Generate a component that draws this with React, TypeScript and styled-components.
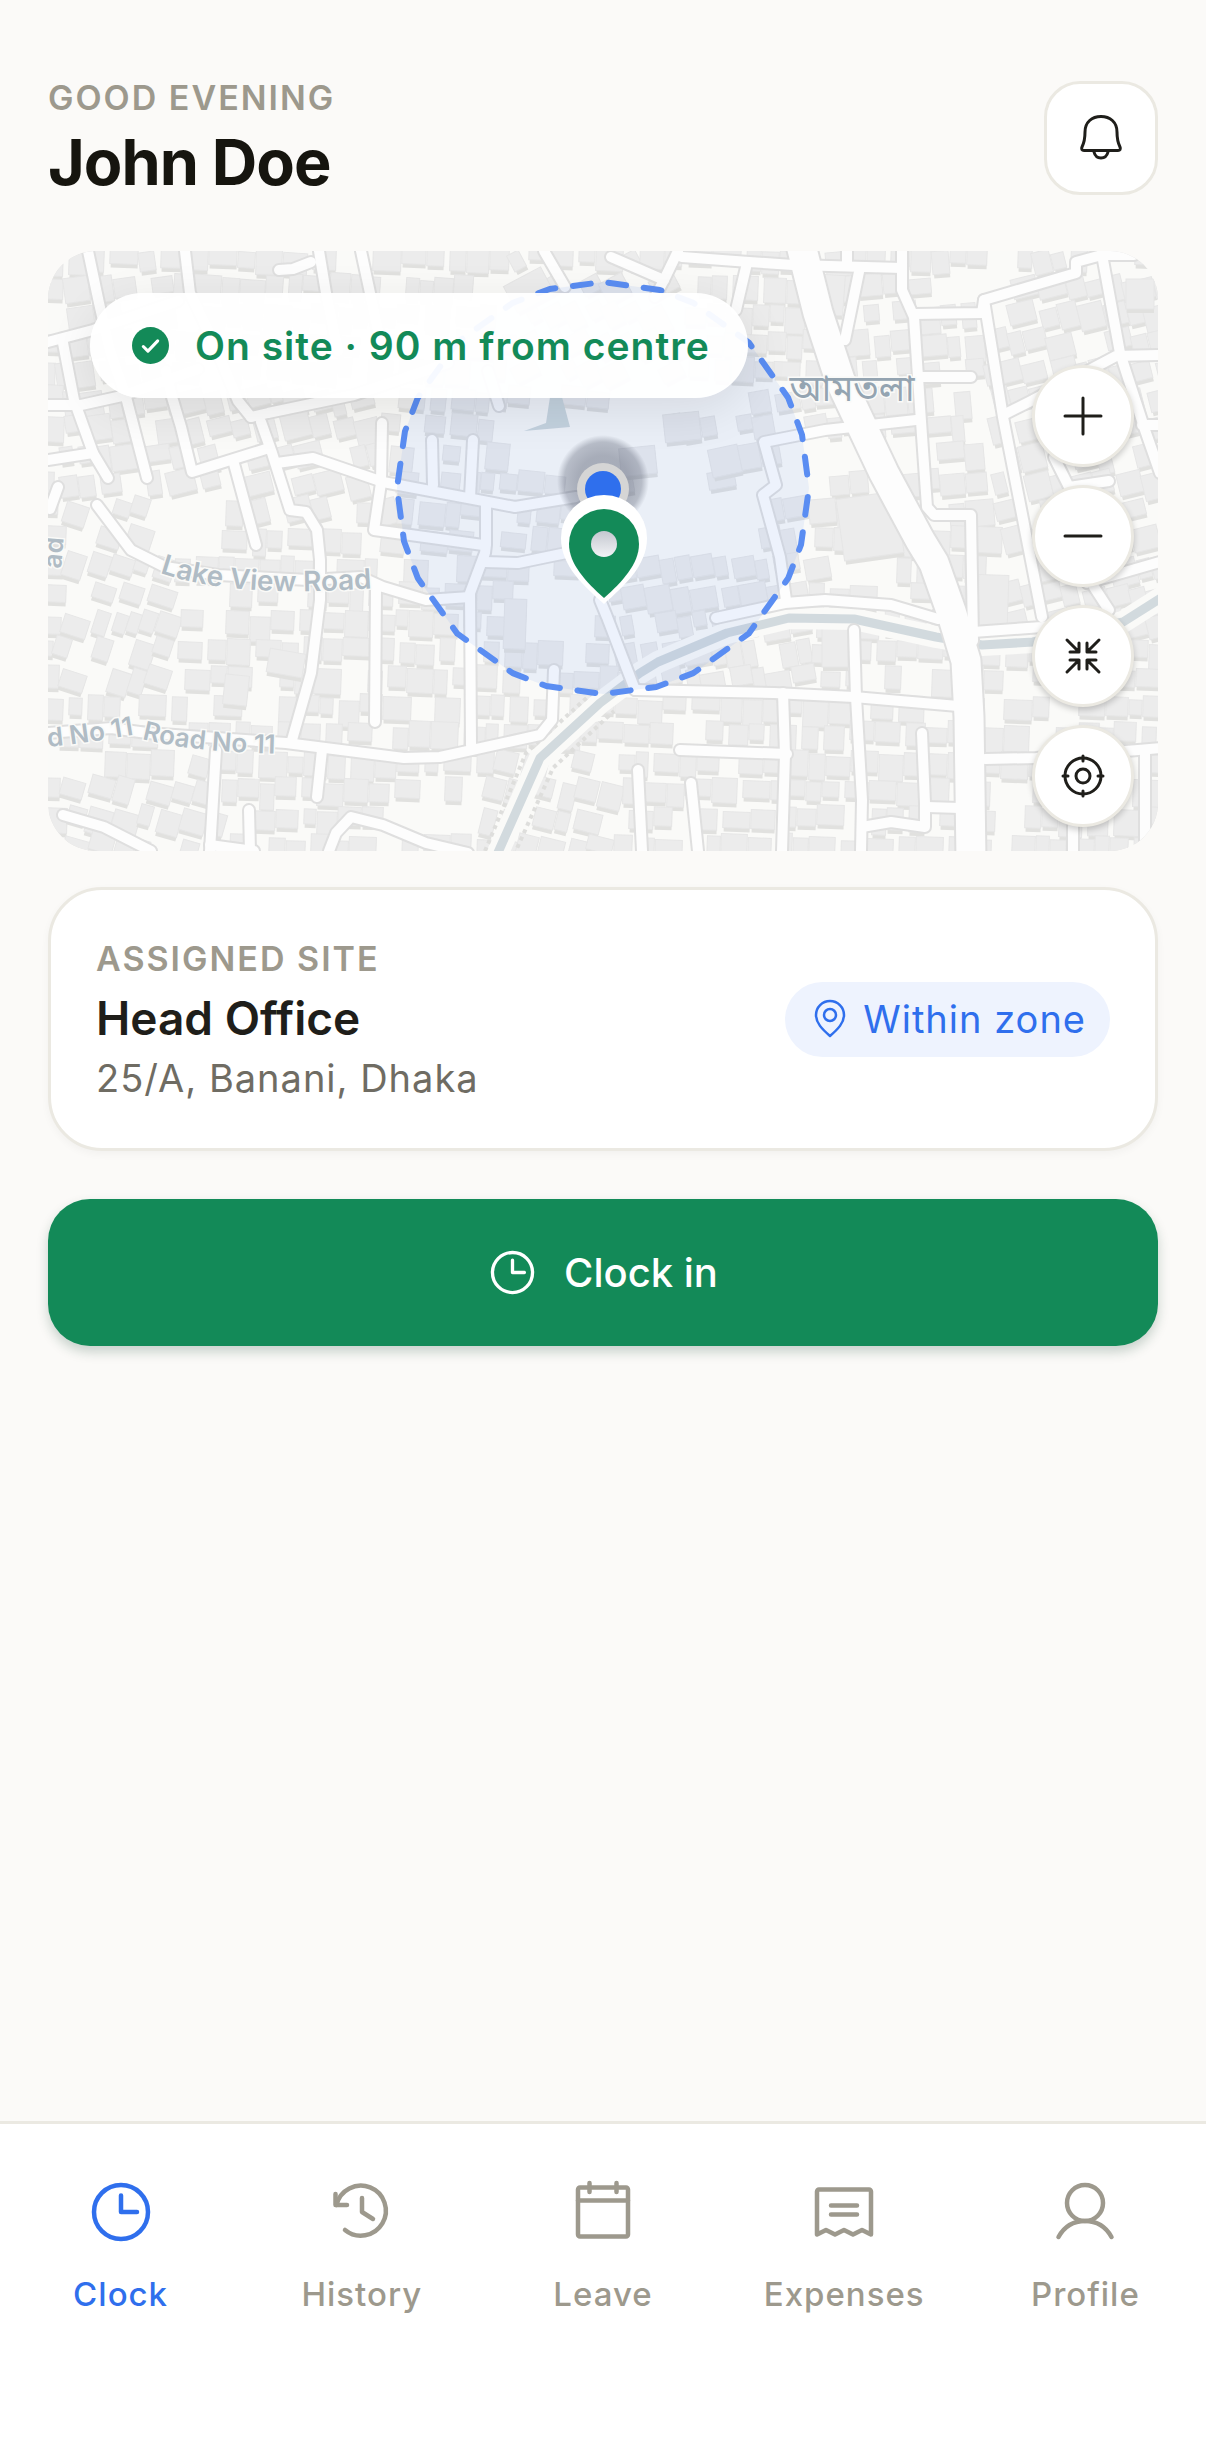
import React from "react"
import styled, { createGlobalStyle } from "styled-components"

const colors = {
    page: "#fbfaf8",
    card: "#ffffff",
    line: "#ebe9e2",
    ink: "#1f1e1a",
    heading: "#16150f",
    muted: "#9d998d",
    body: "#6f6c63",
    green: "#138a58",
    blue: "#2f6fed",
    blueSoft: "#eef3fe",
}

const GlobalStyle = createGlobalStyle`
  * {
    box-sizing: border-box;
  }

  body {
    margin: 0;
    background: ${colors.page};
    color: ${colors.ink};
    font-family: Inter, "Liberation Sans", sans-serif;
  }

  button {
    font-family: inherit;
    cursor: pointer;
  }

  h1, h2, p {
    margin: 0;
  }

  svg {
    display: block;
  }
`

/* ---------- map data ---------- */

type Point = [number, number]

const MAP_W = 1110
const MAP_H = 600
const ZONE: Point = [555, 237]
const ZONE_R = 206

const minorRoads = [
    "40,0 51,52 62,100 78,146 99,227",
    "137,0 142,42 165,90 190,150 203,166",
    "118,120 124,146 133,176 144,221 221,197",
    "271,0 278,42 290,100",
    "231,19 245,18 263,11",
    "313,0 322,42 330,80",
    "0,91 45,79 130,50",
    "0,154 33,154 74,145 150,118",
    "15,92 26,149 45,202 60,227",
    "0,209 45,202",
    "203,166 220,162 306,144 400,112",
    "213,171 224,202 242,259 258,261 269,279 272,309 272,349 263,422 244,489",
    "229,212 265,207 335,231 467,256 528,246",
    "185,209 208,294",
    "334,172 333,232 326,279 435,294",
    "384,189 385,234",
    "425,189 422,246",
    "438,252 438,294 437,302 422,342 423,494",
    "437,311 470,312 528,300",
    "49,254 83,299 117,316 170,324 260,329 313,326 335,336 378,349 422,346",
    "328,336 327,471",
    "10,236 2,258",
    "0,482 63,477 99,482 238,492 356,507 392,506 492,484 504,469 506,419",
    "168,499 162,600",
    "162,594 206,600",
    "274,499 269,546",
    "201,559 202,600",
    "15,564 56,576 103,600",
    "281,600 288,582 303,566 335,574 378,592 420,602",
    "451,155 440,120",
    "552,349 559,366 587,439",
    "587,439 726,442 806,446 910,455",
    "668,367 737,352 777,349 843,354 890,368",
    "868,169 777,179 716,191 728,234 715,244 732,306 738,349",
    "854,0 854,39 866,66 872,156 879,256 886,264 923,264 925,390",
    "866,63 934,62 936,49 1028,22 1028,11 1054,4 1086,4",
    "936,49 955,166 981,299 994,366",
    "955,164 985,149 1068,105 1110,104",
    "1055,9 1072,102 1097,179 1112,222",
    "1094,174 1112,174",
    "872,126 923,126",
    "634,6 701,11 745,14 854,17",
    "563,6 616,29 630,0",
    "616,29 607,46",
    "699,12 688,59",
    "812,16 797,89",
    "799,0 799,14",
    "496,0 517,36",
    "1006,206 1021,236 1061,230",
    "1039,332 1112,311",
    "1046,336 1061,359",
    "925,381 994,376 1040,370",
    "937,508 988,507 1090,499 1112,497",
    "1097,499 1097,600",
    "1025,575 1025,600",
    "806,379 808,446 814,549 813,600",
    "735,442 737,503 734,600",
    "632,499 739,503",
    "590,519 594,600",
    "643,532 650,600",
    "874,482 877,552 877,576 843,571 814,576",
    "879,556 912,557",
]

const avenue = "752,-10 770,62 792,129 836,222 872,289 886,312 903,360 918,410 921,466 923,610"
const canal = "448,606 492,507 552,452 592,422 610,411 679,382 741,367 806,368 888,386 934,394 985,391 1075,371 1116,345"
const canalPaths = ["437,600 478,502 545,441", "466,604 505,517 566,460"]

/* direction that the houses face, by district */
const districts: { box: [number, number, number, number]; angle: number }[] = [
    { box: [0, 0, 110, 230], angle: -8 },
    { box: [110, 0, 460, 120], angle: 4 },
    { box: [110, 120, 330, 250], angle: -14 },
    { box: [0, 230, 120, 440], angle: 18 },
    { box: [440, 0, 620, 120], angle: -28 },
    { box: [330, 120, 560, 290], angle: 6 },
    { box: [560, 120, 760, 440], angle: -10 },
    { box: [760, 0, 930, 260], angle: -5 },
    { box: [930, 0, 1110, 370], angle: -14 },
    { box: [0, 505, 160, 600], angle: 16 },
    { box: [430, 500, 560, 600], angle: 14 },
]

/* blocks left without houses */
const openGround: [number, number, number, number][] = [
    [104, 236, 176, 300],
    [30, 240, 52, 300],
    [390, 300, 420, 340],
    [340, 540, 430, 590],
    [330, 460, 352, 490],
    [450, 150, 610, 230],
    [610, 130, 712, 160],
    [612, 190, 660, 310],
    [470, 320, 550, 400],
    [570, 260, 640, 310],
    [640, 240, 712, 300],
    [205, 420, 236, 470],
    [760, 180, 790, 220],
    [745, 190, 780, 240],
    [785, 300, 850, 345],
    [950, 530, 975, 600],
    [50, 400, 80, 425],
    [900, 20, 930, 60],
]

const seeded = (n: number) => {
    const v = Math.sin(n * 127.1 + 11.7) * 43758.5453
    return v - Math.floor(v)
}

const inside = ([x0, y0, x1, y1]: [number, number, number, number], x: number, y: number) =>
    x >= x0 && x < x1 && y >= y0 && y < y1

interface House {
    x: number
    y: number
    w: number
    h: number
    angle: number
}

const buildHouses = () => {
    const houses: House[] = []
    let n = 1
    for (let row = -6; row < MAP_H; row += 28) {
        let x = -8
        while (x < MAP_W) {
            const w = 12 + Math.round(seeded(n) * 16)
            const h = 15 + Math.round(seeded(n + 0.3) * 12)
            const y = row + Math.round(seeded(n + 0.6) * 8)
            const keep = seeded(n + 0.8) > 0.12
            if (keep && !openGround.some(g => inside(g, x + w / 2, y + h / 2))) {
                const district = districts.find(d => inside(d.box, x, y))
                houses.push({ x, y, w, h, angle: district ? district.angle : 2 })
            }
            x += w + (seeded(n + 0.9) > 0.7 ? 6 : 1)
            n += 1
        }
    }
    return houses
}

const bigHouses: House[] = [
    { x: 792, y: 244, w: 60, h: 62, angle: -8 },
    { x: 930, y: 324, w: 30, h: 52, angle: 2 },
    { x: 616, y: 162, w: 36, h: 28, angle: -6 },
    { x: 662, y: 196, w: 30, h: 28, angle: -12 },
    { x: 572, y: 196, w: 36, h: 28, angle: -6 },
    { x: 456, y: 348, w: 22, h: 50, angle: 2 },
    { x: 774, y: 376, w: 26, h: 40, angle: 0 },
    { x: 460, y: 24, w: 42, h: 30, angle: -28 },
    { x: 1078, y: 28, w: 28, h: 30, angle: 0 },
    { x: 220, y: 400, w: 36, h: 24, angle: 10 },
    { x: 176, y: 424, w: 24, h: 30, angle: 6 },
    { x: 772, y: 24, w: 24, h: 40, angle: 4 },
]

const houses = [...buildHouses(), ...bigHouses]

const quarterTurn = [0, 16, 26, 45, 64, 75]

const zoneOutline = [0, 90, 180, 270]
    .flatMap(start => quarterTurn.map(step => start + step))
    .map(deg => {
        const rad = (deg * Math.PI) / 180
        return `${ZONE[0] + ZONE_R * Math.cos(rad)},${ZONE[1] + ZONE_R * Math.sin(rad)}`
    })
    .join(" ")

const SiteMap = () => (
    <MapDrawing
        viewBox={`0 0 ${MAP_W} ${MAP_H}`}
        preserveAspectRatio="xMidYMid slice"
        role="img"
        aria-label="Map of the assigned site"
    >
        <defs>
            <path id="lake-view" d="M112 322 Q190 349 340 336" />
            <path id="road-11-a" d="M0 496 Q40 492 120 478" />
            <path id="road-11-b" d="M94 488 Q150 503 260 503" />
            <path id="side-road" d="M13 318 L18 262" />
            <radialGradient id="dot-halo">
                <stop offset="0.55" stopColor="#4b5163" stopOpacity="0.42" />
                <stop offset="0.84" stopColor="#4b5163" stopOpacity="0.32" />
                <stop offset="1" stopColor="#4b5163" stopOpacity="0" />
            </radialGradient>
            <linearGradient id="pin-hole" x1="0" y1="0" x2="0" y2="1">
                <stop offset="0" stopColor="#c4c8d0" />
                <stop offset="1" stopColor="#f2f3f6" />
            </linearGradient>
        </defs>
        <rect width={MAP_W} height={MAP_H} fill="#fafaf8" />
        {houses.map((b, i) => (
            <g key={i} transform={`rotate(${b.angle} ${b.x + b.w / 2} ${b.y + b.h / 2})`}>
                <rect x={b.x + 1} y={b.y + 4} width={b.w - 1} height={b.h} fill="#e1e1df" />
                <rect x={b.x} y={b.y} width={b.w} height={b.h} fill="#ececec" stroke="#e6e6e6" />
            </g>
        ))}
        <g fill="none" strokeLinejoin="round">
            <polyline points={canal} stroke="#fafaf8" strokeWidth="22" />
            <polyline points={canal} stroke="#d2dade" strokeWidth="9" />
            {canalPaths.map(p => (
                <polyline key={p} points={p} stroke="#dededc" strokeWidth="4" strokeDasharray="4 4" />
            ))}
        </g>
        <path d="M476 180 L498 172 L502 146 L514 146 L522 176 Z" fill="#cfd9dd" />
        <g fill="none" strokeLinejoin="round" strokeLinecap="round">
            {minorRoads.map(p => (
                <polyline key={p} points={p} stroke="#dfdfdf" strokeWidth="14" />
            ))}
            <polyline points={avenue} stroke="#dfdfdf" strokeWidth="33" />
            {minorRoads.map(p => (
                <polyline key={p} points={p} stroke="#fdfdfd" strokeWidth="10" />
            ))}
            <polyline points={avenue} stroke="#fdfdfd" strokeWidth="29" />
        </g>
        <polygon
            points={zoneOutline}
            fill={colors.blue}
            fillOpacity="0.08"
            stroke="#5a8df2"
            strokeWidth="6"
            strokeLinecap="round"
            strokeLinejoin="round"
            strokeDasharray="18 17.7"
            strokeDashoffset="-9"
        />
        <MapLabel>
            <textPath href="#lake-view">Lake View Road</textPath>
        </MapLabel>
        <MapLabel $small>
            <textPath href="#road-11-a">d No 11</textPath>
        </MapLabel>
        <MapLabel $small>
            <textPath href="#road-11-b">Road No 11</textPath>
        </MapLabel>
        <MapLabel $small>
            <textPath href="#side-road">ad</textPath>
        </MapLabel>
        <PlaceLabel x="804" y="150">আমতলা</PlaceLabel>
        <circle cx="555" cy="230" r="46" fill="url(#dot-halo)" />
        <circle cx="555" cy="238" r="26" fill="#d5d5d5" />
        <circle cx="555" cy="238" r="18" fill={colors.blue} />
        <path
            d="M556 353 C536 335 513 315 513 287 A43 43 0 0 1 599 287 C599 315 576 335 556 353 Z"
            fill="#ffffff"
        />
        <path
            d="M556 347 C538 331 521 313 521 293 A35 35 0 0 1 591 293 C591 313 574 331 556 347 Z"
            fill={colors.green}
        />
        <circle cx="556" cy="293" r="13" fill="url(#pin-hole)" />
    </MapDrawing>
)

/* ---------- icons ---------- */

interface IconProps {
    size: number
    weight?: number
    box?: number
    children: React.ReactNode
}

const Icon = ({ size, weight = 4.5, box = 66, children }: IconProps) => (
    <svg
        width={size}
        height={size}
        viewBox={`0 0 ${box} ${box}`}
        fill="none"
        stroke="currentColor"
        strokeWidth={weight}
        strokeLinecap="round"
        strokeLinejoin="round"
        aria-hidden="true"
    >
        {children}
    </svg>
)

const clockShape = (
    <>
        <circle cx="33" cy="33" r="27" />
        <path d="M33 16.500V33H49" />
    </>
)

const tabs = [
    { name: "Clock", icon: clockShape },
    {
        name: "History",
        icon: (
            <>
                <path d="M6.500 15V26H18" />
                <path d="M7.500 26A25 25 0 1 1 16 51" />
                <path d="M33 19V33L44 40" />
            </>
        ),
    },
    {
        name: "Leave",
        icon: (
            <>
                <rect x="8" y="8.500" width="50" height="49" rx="2" />
                <path d="M8 21.500H58M19.500 4V13M46.500 4V13" />
            </>
        ),
    },
    {
        name: "Expenses",
        icon: (
            <>
                <path d="M6 55.500V12.500A2 2 0 0 1 8 10.500H58A2 2 0 0 1 60 12.500V55.500L51 51L42 55.500L33 51L24 55.500L15 51Z" />
                <path d="M20 26.500H46M20 35.500H46" />
            </>
        ),
    },
    {
        name: "Profile",
        icon: (
            <>
                <circle cx="33" cy="24" r="18" />
                <path d="M6.500 58C12 48 21 42 33 42C45 42 54 48 59.500 58" />
            </>
        ),
    },
]

const mapControls = [
    { label: "Zoom in", icon: <path d="M24 6V42M6 24H42" /> },
    { label: "Zoom out", icon: <path d="M6 24H42" /> },
    {
        label: "Fit to zone",
        icon: (
            <path d="M8 8L20 20M20 11V20H11M40 8L28 20M28 11V20H37M8 40L20 28M20 37V28H11M40 40L28 28M28 37V28H37" />
        ),
    },
    {
        label: "My location",
        icon: (
            <>
                <circle cx="24" cy="24" r="18" />
                <circle cx="24" cy="24" r="7" />
                <path d="M24 4V9M24 39V44M4 24H9M39 24H44" />
            </>
        ),
    },
]

const App = () => {
    return (
        <Page>
            <GlobalStyle />
            <Content>
                <Header>
                    <Greeting>
                        <Eyebrow>GOOD EVENING</Eyebrow>
                        <UserName>John Doe</UserName>
                    </Greeting>
                    <BellButton type="button" aria-label="Notifications">
                        <Icon size={60} box={60} weight={3}>
                            <path d="M13 42.500H47C49 42.500 50 41 49 39C47 35 46 31 46 24C46 14 39 8.500 30 8.500C21 8.500 14 14 14 24C14 31 13 35 11 39C10 41 11 42.500 13 42.500Z" />
                            <path d="M23 44C24 48 27 50 30 50C33 50 36 48 37 44" />
                        </Icon>
                    </BellButton>
                </Header>

                <MapCard>
                    <SiteMap />
                    <StatusChip>
                        <Icon size={37} box={36} weight={3}>
                            <circle cx="18" cy="18" r="18" fill={colors.green} stroke="none" />
                            <path d="M11 19L15.500 23.500L25 13.500" stroke="#ffffff" />
                        </Icon>
                        On site · 90 m from centre
                    </StatusChip>
                    <MapControls>
                        {mapControls.map(c => (
                            <RoundButton type="button" key={c.label} aria-label={c.label}>
                                <Icon size={48} box={48} weight={3}>{c.icon}</Icon>
                            </RoundButton>
                        ))}
                    </MapControls>
                </MapCard>

                <SiteCard>
                    <SiteInfo>
                        <Eyebrow>ASSIGNED SITE</Eyebrow>
                        <SiteName>Head Office</SiteName>
                        <SiteAddress>25/A, Banani, Dhaka</SiteAddress>
                    </SiteInfo>
                    <ZoneBadge>
                        <Icon size={42} box={42} weight={2.5}>
                            <path d="M21 38C13 31 7 25 7 17A14 14 0 0 1 35 17C35 25 29 31 21 38Z" />
                            <circle cx="21" cy="17" r="6" />
                        </Icon>
                        Within zone
                    </ZoneBadge>
                </SiteCard>

                <ClockInButton type="button">
                    <Icon size={49} weight={4.5}>
                        {clockShape}
                    </Icon>
                    Clock in
                </ClockInButton>
            </Content>

            <TabBar>
                {tabs.map((tab, i) => (
                    <Tab
                        href={`#${tab.name.toLowerCase()}`}
                        key={tab.name}
                        $active={i === 0}
                        aria-current={i === 0 ? "page" : undefined}
                    >
                        <Icon size={66}>{tab.icon}</Icon>
                        {tab.name}
                    </Tab>
                ))}
            </TabBar>
        </Page>
    )
}

const Page = styled.div`
  display: flex;
  flex-direction: column;
  min-height: 100vh;
`

const Content = styled.main`
  flex: 1;
  display: flex;
  flex-direction: column;
  padding: 77px 48px 48px;
`

const Header = styled.header`
  display: flex;
  align-items: center;
  justify-content: space-between;
  margin-bottom: 52px;
`

const Greeting = styled.div`
  display: flex;
  flex-direction: column;
  gap: 6px;
`

const Eyebrow = styled.p`
  font-size: 34px;
  line-height: 42px;
  font-weight: 600;
  letter-spacing: 2px;
  color: ${colors.muted};
`

const UserName = styled.h1`
  font-size: 63px;
  line-height: 74px;
  font-weight: 700;
  letter-spacing: -1px;
  color: ${colors.heading};
`

const BellButton = styled.button`
  display: grid;
  place-items: center;
  width: 114px;
  height: 114px;
  padding: 0;
  border: 3px solid ${colors.line};
  border-radius: 36px;
  background: ${colors.card};
  color: ${colors.ink};
`

const MapCard = styled.section`
  position: relative;
  height: 600px;
  border-radius: 48px;
  overflow: hidden;
`

const MapDrawing = styled.svg`
  width: 100%;
  height: 100%;
`

const MapLabel = styled.text<{ $small?: boolean }>`
  font-family: Inter, sans-serif;
  font-size: ${({ $small }) => ($small ? 26 : 28)}px;
  font-weight: 600;
  fill: #b0bcc5;
  stroke: #fafaf8;
  stroke-width: 3px;
  paint-order: stroke;
`

const PlaceLabel = styled.text`
  font-family: "Noto Sans Bengali", "Noto Sans", sans-serif;
  font-size: 36px;
  text-anchor: middle;
  fill: #94a4b1;
  stroke: #fafaf8;
  stroke-width: 3px;
  paint-order: stroke;
`

const StatusChip = styled.div`
  position: absolute;
  top: 42px;
  left: 42px;
  display: flex;
  align-items: center;
  gap: 26px;
  height: 105px;
  padding: 0 38px 0 42px;
  border-radius: 53px;
  background: rgba(255, 255, 255, 0.95);
  box-shadow: 0 12px 48px rgba(0, 0, 0, 0.09);
  font-size: 39px;
  line-height: 48px;
  font-weight: 600;
  letter-spacing: 1px;
  color: ${colors.green};
`

const MapControls = styled.div`
  position: absolute;
  right: 24px;
  bottom: 24px;
  display: flex;
  flex-direction: column;
  gap: 18px;
`

const RoundButton = styled.button`
  display: grid;
  place-items: center;
  width: 102px;
  height: 102px;
  padding: 0;
  border: 3px solid ${colors.line};
  border-radius: 50%;
  background: ${colors.card};
  box-shadow: 0 3px 6px rgba(0, 0, 0, 0.2);
  color: ${colors.ink};
`

const SiteCard = styled.section`
  display: flex;
  align-items: center;
  justify-content: space-between;
  margin-top: 36px;
  padding: 48px 45px;
  border: 3px solid ${colors.line};
  border-radius: 54px;
  background: ${colors.card};
  box-shadow: 0 3px 9px rgba(0, 0, 0, 0.04);
`

const SiteInfo = styled.div`
  display: flex;
  flex-direction: column;
  gap: 6px;
`

const SiteName = styled.h2`
  font-size: 46px;
  line-height: 64px;
  font-weight: 600;
`

const SiteAddress = styled.p`
  font-size: 38px;
  line-height: 44px;
  letter-spacing: 1px;
  color: ${colors.body};
`

const ZoneBadge = styled.div`
  display: flex;
  align-items: center;
  gap: 12px;
  height: 75px;
  padding: 0 24px;
  border-radius: 38px;
  background: ${colors.blueSoft};
  font-size: 38px;
  line-height: 48px;
  letter-spacing: 1px;
  color: ${colors.blue};
`

const ClockInButton = styled.button`
  display: flex;
  align-items: center;
  justify-content: center;
  gap: 27px;
  height: 147px;
  margin-top: 48px;
  border: 0;
  border-radius: 42px;
  background: ${colors.green};
  box-shadow: 0 6px 12px rgba(20, 70, 45, 0.22);
  font-size: 40px;
  line-height: 48px;
  font-weight: 500;
  color: #ffffff;
`

const TabBar = styled.nav`
  display: grid;
  grid-template-columns: repeat(5, 1fr);
  padding: 55px 0 147px;
  border-top: 3px solid ${colors.line};
  background: ${colors.card};
`

const Tab = styled.a<{ $active: boolean }>`
  display: flex;
  flex-direction: column;
  align-items: center;
  gap: 28px;
  font-size: 33px;
  line-height: 42px;
  font-weight: 500;
  letter-spacing: 1px;
  text-decoration: none;
  color: ${({ $active }) => ($active ? colors.blue : colors.muted)};
`

export default App
